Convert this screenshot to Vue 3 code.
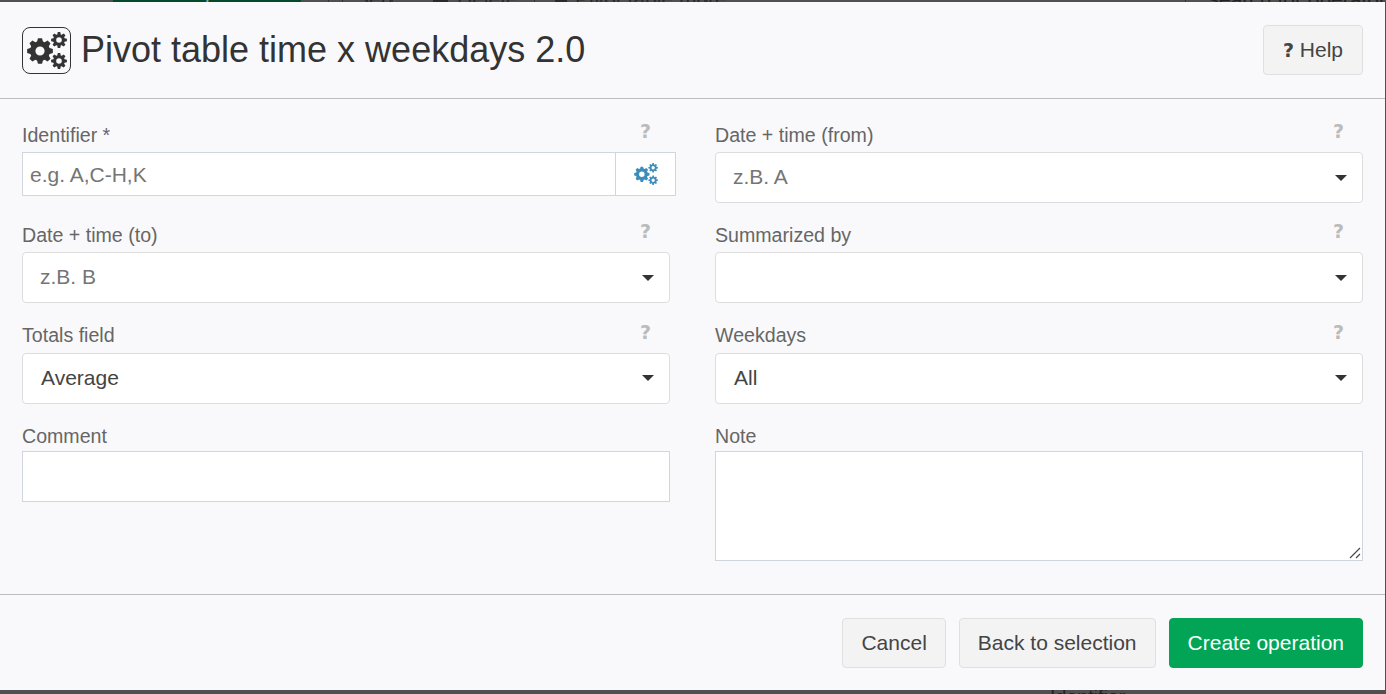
<template>
  <div class="page">
    <!-- what is left visible of the page behind the dialog -->
    <div class="behind-top">
      <span class="add-btn">+ Add operation</span>
      <i v-for="x in separators" :key="x" class="sep" :style="{ left: x + 'px' }"></i>
      <i class="blob"></i>
      <i class="blob blob-small"></i>
      <span class="tab tab-a">Sep</span>
      <span class="tab tab-b">Delete</span>
      <span class="tab tab-c">Pivot table more</span>
      <span class="search">Search for operator</span>
    </div>

    <div class="modal">
      <header class="modal-header">
        <div class="title-wrap">
          <span class="icon-box">
            <svg class="cogs" viewBox="0 0 40 37"><path :d="cogsPath" fill-rule="evenodd" /></svg>
          </span>
          <h1 class="title">Pivot table time x weekdays 2.0</h1>
        </div>
        <button class="btn help-btn"><b class="q">?</b> Help</button>
      </header>

      <div class="modal-body">
        <div class="form-grid">
          <div v-for="field in fields" :key="field.label" class="field" :class="{ plain: field.type === 'comment' || field.type === 'note' }">
            <div class="label-row">
              <label>{{ field.label }}</label>
              <span v-if="field.hint" class="hint">?</span>
            </div>

            <div v-if="field.type === 'group'" class="input-group">
              <input class="text-input" :placeholder="field.placeholder" />
              <span class="addon">
                <svg class="cogs-blue" viewBox="0 0 40 37"><path :d="cogsPath" fill-rule="evenodd" /></svg>
              </span>
            </div>

            <div v-else-if="field.type === 'select'" class="select">
              <span :class="field.placeholder ? 'placeholder' : 'value'">{{ field.placeholder || field.value }}</span>
              <i class="caret"></i>
            </div>

            <input v-else-if="field.type === 'comment'" class="comment" />
            <div v-else class="note-wrap">
              <textarea class="note"></textarea>
              <svg class="grip" viewBox="0 0 12 12">
                <path d="M1 11 11 1M7 11l4-4" />
              </svg>
            </div>
          </div>
        </div>
      </div>

      <footer class="modal-footer">
        <button class="btn">Cancel</button>
        <button class="btn">Back to selection</button>
        <button class="btn primary">Create operation</button>
      </footer>
    </div>

    <div class="behind-bottom">
      <span class="behind-label">Identifier</span>
    </div>
  </div>
</template>

<script setup>
const separators = [328, 342, 392, 534, 704, 1185]

const fields = [
  { label: 'Identifier *', type: 'group', hint: true, placeholder: 'e.g. A,C-H,K' },
  { label: 'Date + time (from)', type: 'select', hint: true, placeholder: 'z.B. A' },
  { label: 'Date + time (to)', type: 'select', hint: true, placeholder: 'z.B. B' },
  { label: 'Summarized by', type: 'select', hint: true, value: '' },
  { label: 'Totals field', type: 'select', hint: true, value: 'Average' },
  { label: 'Weekdays', type: 'select', hint: true, value: 'All' },
  { label: 'Comment', type: 'comment' },
  { label: 'Note', type: 'note' }
]

// Zahnrad als Pfad: Zaehne plus Loch in der Mitte (evenodd)
function gear(cx, cy, outer, root, hole, teeth) {
  const pts = []
  const step = (Math.PI * 2) / teeth
  for (let i = 0; i < teeth; i++) {
    const a = i * step - Math.PI / 2
    const w = step * 0.2
    const corners = [
      [root, a - step / 2 + w * 0.6],
      [outer, a - w],
      [outer, a + w],
      [root, a + step / 2 - w * 0.6]
    ]
    corners.forEach(([r, t]) => {
      pts.push((cx + r * Math.cos(t)).toFixed(2) + ' ' + (cy + r * Math.sin(t)).toFixed(2))
    })
  }
  const ring = 'M' + pts.join('L') + 'Z'
  const circle = `M${cx - hole} ${cy}a${hole} ${hole} 0 1 0 ${hole * 2} 0a${hole} ${hole} 0 1 0 ${-hole * 2} 0Z`
  return ring + circle
}

const cogsPath = gear(13, 19, 13, 10, 4.6, 8) + gear(32, 8, 8, 5.8, 2.8, 8) + gear(32, 29, 8, 5.8, 2.8, 8)
</script>

<style>
html, body {
  margin: 0;
  overflow: hidden;
}
</style>

<style scoped>
.page {
  height: 694px;
  display: flex;
  flex-direction: column;
  overflow: hidden;
  background: #505050;
  font-family: "Liberation Sans", Arial, sans-serif;
  color: #333;
}

.behind-top {
  height: 2px;
  flex: none;
  overflow: hidden;
  position: relative;
  font-size: 21px;
  line-height: 14px;
}

.add-btn {
  position: absolute;
  left: 113px;
  bottom: -2px;
  width: 188px;
  height: 20px;
  background: #04492a;
  color: #8fa89b;
  text-align: center;
}

.sep {
  position: absolute;
  top: 0;
  width: 1px;
  height: 2px;
  background: #333;
}

.blob {
  position: absolute;
  left: 433px;
  top: 0;
  width: 15px;
  height: 2px;
  background: #2a2a2a;
}

.blob-small {
  left: 555px;
  width: 12px;
}

.tab {
  position: absolute;
  bottom: -4px;
  color: #2a2a2a;
  white-space: nowrap;
}

.tab-a { left: 355px; }
.tab-b { left: 457px; }
.tab-c { left: 575px; }

.search {
  position: absolute;
  left: 1205px;
  bottom: -5px;
  color: #222;
  white-space: nowrap;
}

.modal {
  height: 688px;
  flex: none;
  margin-right: 1px;
  display: flex;
  flex-direction: column;
  background: #f9f9fb;
}

.modal-header {
  height: 97px;
  flex: none;
  box-sizing: border-box;
  padding: 0 22px;
  display: flex;
  align-items: center;
  justify-content: space-between;
  border-bottom: 1px solid #bdbdbd;
}

.title-wrap {
  display: flex;
  align-items: center;
  gap: 10px;
}

.icon-box {
  width: 49px;
  height: 47px;
  box-sizing: border-box;
  border: 1px solid #333;
  border-radius: 8px;
  display: flex;
  align-items: center;
  justify-content: center;
}

.cogs {
  width: 40px;
  height: 37px;
  fill: #333;
}

.title {
  margin: 0;
  font-size: 36px;
  font-weight: 400;
  line-height: 1.1;
  color: #333;
}

.btn {
  height: 50px;
  box-sizing: border-box;
  padding: 0 18px;
  border: 1px solid #e0e0e0;
  border-radius: 4px;
  background: #f3f3f3;
  color: #444;
  font-family: inherit;
  font-size: 21px;
}

.help-btn {
  width: 100px;
  padding: 0;
}

.q {
  font-family: "DejaVu Sans", sans-serif;
  font-size: 19px;
}

.primary {
  background: #02a556;
  border-color: #02a556;
  color: #fff;
}

.modal-body {
  flex: 1;
  padding: 25px 22px 0;
}

.form-grid {
  display: grid;
  grid-template-columns: 648px 648px;
  column-gap: 45px;
  row-gap: 21.4px;
}

.label-row {
  height: 22px;
  margin-bottom: 6px;
  display: flex;
  justify-content: space-between;
  align-items: center;
}

.plain .label-row {
  margin-bottom: 4px;
}

label {
  font-size: 19.6px;
  color: #666;
}

.hint {
  margin-right: 19px;
  margin-top: -8px;
  font-family: "DejaVu Sans", sans-serif;
  font-weight: 700;
  font-size: 19px;
  color: #bbb;
}

.input-group {
  display: flex;
  width: 654px;
  height: 44px;
}

.text-input {
  flex: 1;
  min-width: 0;
  box-sizing: border-box;
  border: 1px solid #d0d5e0;
  border-right: 0;
  background: #fff;
  padding: 2px 7px 0;
  font-family: inherit;
  font-size: 21px;
  color: #333;
  outline: none;
}

.text-input::placeholder {
  color: #757575;
}

.addon {
  width: 61px;
  box-sizing: border-box;
  border: 1px solid #d0d5e0;
  background: #fff;
  display: flex;
  align-items: center;
  justify-content: center;
}

.cogs-blue {
  width: 24px;
  height: 22px;
  fill: #3c8dbc;
}

.select {
  height: 51px;
  box-sizing: border-box;
  border: 1px solid #ddd;
  border-radius: 4px;
  background: #fff;
  padding: 0 15px 0 18px;
  display: flex;
  align-items: center;
  justify-content: space-between;
  font-size: 21px;
}

.placeholder {
  color: #757575;
  margin: -2px 0 0 -1px;
}

.value {
  color: #444;
}

.caret {
  width: 0;
  height: 0;
  border-left: 6px solid transparent;
  border-right: 6px solid transparent;
  border-top: 6px solid #333;
}

.comment,
.note {
  display: block;
  width: 100%;
  box-sizing: border-box;
  border: 1px solid #d0d5e0;
  background: #fff;
  outline: none;
  margin: 0;
}

.comment {
  height: 51px;
}

.note-wrap {
  position: relative;
}

.note {
  height: 110px;
  resize: none;
}

.grip {
  position: absolute;
  right: 2px;
  bottom: 2px;
  width: 12px;
  height: 12px;
  fill: none;
  stroke: #444;
  stroke-width: 1.1;
}

.modal-footer {
  height: 96px;
  flex: none;
  box-sizing: border-box;
  padding: 23px 22px 0;
  border-top: 1px solid #bdbdbd;
  display: flex;
  justify-content: flex-end;
  gap: 13px;
}

.behind-bottom {
  height: 4px;
  flex: none;
  overflow: hidden;
  position: relative;
}

.behind-label {
  position: absolute;
  left: 1050px;
  top: -3px;
  font-size: 19.6px;
  line-height: 20px;
  color: #222;
}
</style>
